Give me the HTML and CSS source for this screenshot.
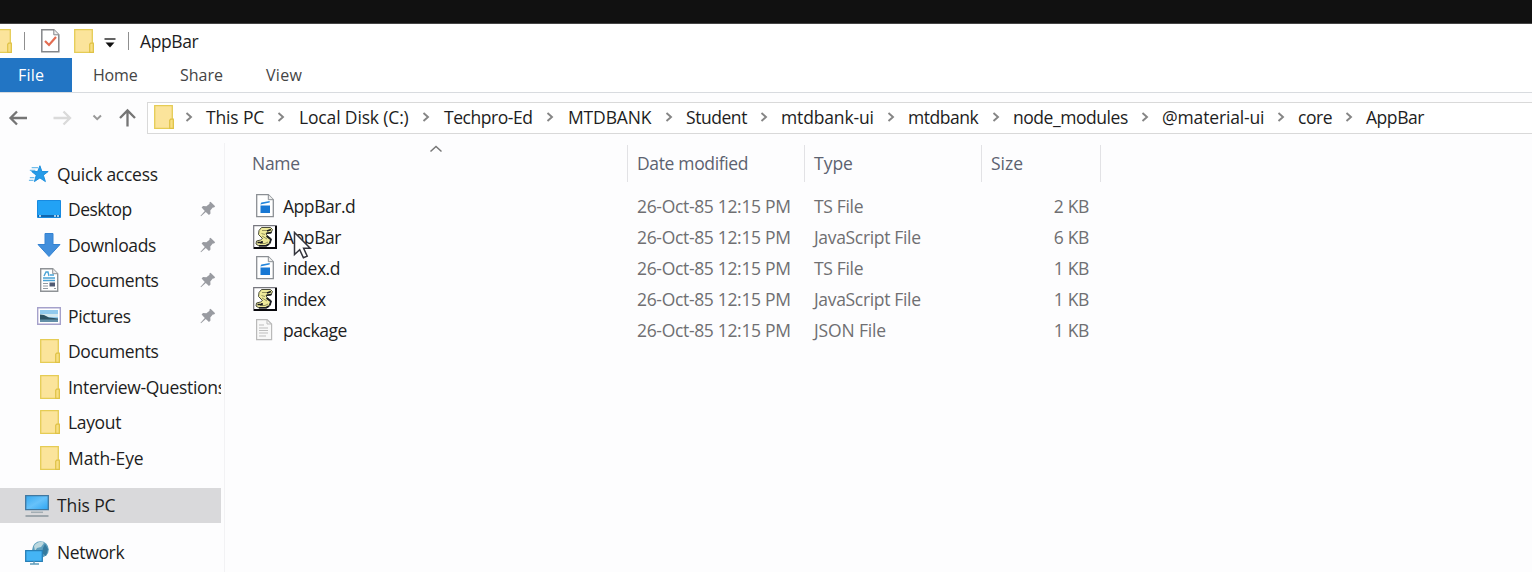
FILE: index.html
```html
<!DOCTYPE html>
<html lang="en">
<head>
<meta charset="utf-8">
<title>AppBar</title>
<link rel="stylesheet" href="styles.css">
</head>
<body>
<svg class="defs" width="0" height="0">
  <symbol id="folder" viewBox="0 0 20 24"><path d="M.7.7h17.6v14.6h1v8H.7z" fill="#fbe49b" stroke="#e5cc55" stroke-width="1.3"/><path d="M15.7 23.3v-8l1-1.2h2.6v9.2z" fill="#f8df83" stroke="#dfc246" stroke-width="1.2"/></symbol>
  <symbol id="pin" viewBox="0 0 16 16"><path d="M10.5.8l4.700 4.400-1.200 1.400-1.200-.2-2.500 3 .2 3.100-1.500 1.500-3.200-3L1 15.200l-.5-.5 4.300-4.700-3.200-3.500L3 5l3.400.3 3.200-2.500-.3-1z" fill="#999ba1"/></symbol>
  <symbol id="sep" viewBox="0 0 8 10"><path d="M1.5 1L6 5 1.500 9" fill="none" stroke="#858585" stroke-width="1.900"/></symbol>
  <symbol id="ts" viewBox="0 0 18 24"><path d="M.7.7h11.600l5 5v17H.7z" fill="#fff" stroke="#8b8f94" stroke-width="1.300"/><path d="M12.300.7v5h5" fill="#eee" stroke="#8b8f94"/><path d="M4.500 11.500h9.500v7.500H4.500z" fill="#1878d4"/><path d="M4.300 10.500l1-2 8.400-1.500v1.500z" fill="#2486dc"/></symbol>
  <symbol id="js" viewBox="0 0 24 24"><path d="M.7.7h22.600v22.600H.7z" fill="#fff" stroke="#77777f" stroke-width="1.200"/><path d="M23 1v22H1" fill="none" stroke="#08080c" stroke-width="2"/><path d="M8.500 2.500h9l2 2-1.500 3.500-5 .5 1 2 4 3-.5 4.500-3.500 3H6l-3-2 .5-3 4-1 2-1.500-4-4 .5-4z" fill="#eeea9a" stroke="#4b4d3a" stroke-width="1"/><path d="M9 5.500h6M8.500 8.500l3.500 1M9 11l5 3M7 18.500h5l3-1.500" stroke="#96935d" fill="none"/><path d="M14 6l4-1.500M13.500 8.300l5-.8M13.500 11l4.500 3.500-1.500 4M4.500 17.500h4.500v-1.500M6 20.800h7l3-1.800" stroke="#191b22" stroke-width="1.600" fill="none"/></symbol>
</svg>
<div class="black"></div>
<header class="title">
  <svg class="cut" width="12" height="24" viewBox="8 0 12 24"><use href="#folder" width="20" height="24"/></svg>
  <i class="bar b1"></i>
  <svg class="check" width="19" height="24" viewBox="0 0 19 24"><path d="M.8.800h12l5 5v17H.8z" fill="#fff" stroke="#85878a" stroke-width="1.500"/><path d="M12.800.8v5h5" fill="#eee" stroke="#85878a"/><path d="M4 12l4 4 7-8" fill="none" stroke="#e36c51" stroke-width="2.200"/></svg>
  <svg class="f2" width="20" height="24"><use href="#folder"/></svg>
  <svg class="drop" width="12" height="10" viewBox="0 0 12 10"><path d="M.5 1h11" stroke="#222" stroke-width="1.400"/><path d="M1.500 4.500h9L6 9.500z" fill="#111"/></svg>
  <i class="bar b2"></i>
  <span class="t-title">AppBar</span>
</header>
<nav class="tabs"><span class="file">File</span><span class="home">Home</span><span class="share">Share</span><span class="view">View</span></nav>
<div class="address">
  <svg class="nav" width="147" height="32" viewBox="0 0 147 32" fill="none" stroke-width="2.300"><path d="M27 15H11M17 8.500L10.500 15l6.500 6.500" stroke="#757575"/><path d="M53.500 15h16M63.500 8.500L70 15l-6.500 6.500" stroke="#dadada"/><path d="M93.500 12.500l3.700 3.700 3.800-3.700" stroke="#999" stroke-width="2"/><path d="M127.500 23.500V8M120 15l7.500-7.500L135 15" stroke="#757575"/></svg>
  <div class="box">
    <svg class="f3" width="20" height="24"><use href="#folder"/></svg>
    <div class="crumbs">
      <svg class="sep"><use href="#sep"/></svg><span>This PC</span>
      <svg class="sep"><use href="#sep"/></svg><span>Local Disk (C:)</span>
      <svg class="sep"><use href="#sep"/></svg><span class="tight">Techpro-Ed</span>
      <svg class="sep"><use href="#sep"/></svg><span>MTDBANK</span>
      <svg class="sep"><use href="#sep"/></svg><span class="tight">Student</span>
      <svg class="sep"><use href="#sep"/></svg><span>mtdbank-ui</span>
      <svg class="sep"><use href="#sep"/></svg><span class="tight">mtdbank</span>
      <svg class="sep"><use href="#sep"/></svg><span class="tight">node_modules</span>
      <svg class="sep"><use href="#sep"/></svg><span>@material-ui</span>
      <svg class="sep"><use href="#sep"/></svg><span class="tight">core</span>
      <svg class="sep"><use href="#sep"/></svg><span class="tight">AppBar</span>
    </div>
  </div>
</div>
<main class="main">
  <aside class="side">
    <div class="item root"><svg class="ic" viewBox="0 0 24 24"><path d="M13 3l2.200 6.300H22l-5.200 4 2.200 7-6-4-6 4 2-7-5-4h6.500z" fill="#279ce8" stroke="#168bdc"/><path d="M4 5h7M2 8h6M2 16h5M1 19h5" stroke="#72bdea" stroke-width="1.300"/></svg><span class="qa">Quick access</span></div>
    <div class="item"><svg class="ic" viewBox="0 0 24 24"><path d="M.5 3.500h23v17H.5z" fill="#22a2f5" stroke="#188ae0"/><path d="M1 19h22" stroke="#1066ae" stroke-width="2"/><path d="M2 19h2M17 19h2M20 19h2" stroke="#d5efff" stroke-width="1.500"/></svg><span class="desk">Desktop</span><svg class="pin"><use href="#pin"/></svg></div>
    <div class="item"><svg class="ic" viewBox="0 0 24 24"><path d="M8 .5h8v11h7L12 23.500 1 11.500h7z" fill="#428fdc" stroke="#3483d2"/></svg><span class="down">Downloads</span><svg class="pin"><use href="#pin"/></svg></div>
    <div class="item"><svg class="ic" viewBox="0 0 24 24"><path d="M3.700.7h12l5 5v17.600h-17z" fill="#fff" stroke="#8e9296" stroke-width="1.400"/><path d="M15.700.7v5h5" fill="#eee" stroke="#8e9296"/><path d="M7 8l2-4h2l1 4M13 7h4M6 10h12M6 12.500h12" stroke="#4aa3d5" stroke-width="1.400" fill="none"/><path d="M6 15.500h5M6 18h5M6 20.500h5M17 20.500h2" stroke="#929aa2"/><path d="M12.500 14.500h5.500v4h-5.500z" fill="#505a73"/></svg><span class="docs">Documents</span><svg class="pin"><use href="#pin"/></svg></div>
    <div class="item"><svg class="ic" viewBox="0 0 24 24"><path d="M.7 3.700h22.600v16.600H.7z" fill="#fff" stroke="#a5a1cb" stroke-width="1.400"/><path d="M3 6h18v12H3z" fill="#91c9ed"/><path d="M3 10h18v3H3z" fill="#d4e8ef"/><path d="M3 10.500l4 .5 5 2.500 9 1V16H3z" fill="#2e5264"/><path d="M3 15.500h18V18H3z" fill="#6390a8"/></svg><span class="pics">Pictures</span><svg class="pin"><use href="#pin"/></svg></div>
    <div class="item"><svg class="ic fo"><use href="#folder"/></svg><span class="docs">Documents</span></div>
    <div class="item"><svg class="ic fo"><use href="#folder"/></svg><span class="iq">Interview-Questions</span></div>
    <div class="item"><svg class="ic fo"><use href="#folder"/></svg><span class="lay">Layout</span></div>
    <div class="item"><svg class="ic fo"><use href="#folder"/></svg><span class="math">Math-Eye</span></div>
    <div class="item root2 sel"><svg class="ic" viewBox="0 0 24 24"><defs><linearGradient id="g" x2="1" y2="1"><stop stop-color="#35a8ef"/><stop offset=".5" stop-color="#67c2fa"/><stop offset="1" stop-color="#2ba5f4"/></linearGradient></defs><path d="M.7 2.700h22.600v14H.7z" fill="url(#g)" stroke="#40779f" stroke-width="1.300"/><path d="M6 19.300h12" stroke="#a2adb3" stroke-width="1.500"/><path d="M.5 23h23" stroke="#89959d" stroke-width="1.500"/></svg><span class="pc">This PC</span></div>
    <div class="item root2 net"><svg class="ic" viewBox="0 0 24 24"><circle cx="15.500" cy="8.500" r="8.300" fill="#5d9fbd"/><path d="M9 5c3-5 9-5 10-3l-3 4-4 1-2 3z" fill="#bcd8df"/><path d="M20 3l3 5-2 7-4-3 1-5z" fill="#357a9e"/><path d="M.7 9.700h16.600v10.600H.7z" fill="#44b4f5" stroke="#287fb6" stroke-width="1.300"/><path d="M9 20v3M5 23h9" stroke="#5c9ab9" stroke-width="1.400"/></svg><span class="nw">Network</span></div>
  </aside>
  <section class="list">
    <div class="head">
      <div class="c-name"><span class="h-name">Name</span><svg class="sort" width="14" height="8" viewBox="0 0 14 8"><path d="M1.500 6.500L7 1.500l5.500 5" fill="none" stroke="#777" stroke-width="1.500"/></svg></div>
      <div class="c"><span class="h-date">Date modified</span></div><div class="c"><span class="h-type">Type</span></div><div class="c last"><span class="h-size">Size</span></div>
    </div>
    <div class="row"><svg class="fi ts-icon"><use href="#ts"/></svg><span class="n n1">AppBar.d</span><span class="d">26-Oct-85 12:15 PM</span><span class="ty">TS File</span><span class="s">2 KB</span></div>
    <div class="row"><svg class="fi"><use href="#js"/></svg><span class="n n2">AppBar</span><span class="d">26-Oct-85 12:15 PM</span><span class="ty">JavaScript File</span><span class="s">6 KB</span>
      <svg class="cursor" width="20" height="29" viewBox="0 0 20 29"><path d="M1.500 1.500v22l5.200-4.700 3.700 8 3.800-1.700-3.600-7.800h6.600z" fill="#fff" stroke="#33343c" stroke-width="1.500"/></svg></div>
    <div class="row"><svg class="fi ts-icon"><use href="#ts"/></svg><span class="n n3">index.d</span><span class="d">26-Oct-85 12:15 PM</span><span class="ty">TS File</span><span class="s">1 KB</span></div>
    <div class="row"><svg class="fi"><use href="#js"/></svg><span class="n n4">index</span><span class="d">26-Oct-85 12:15 PM</span><span class="ty">JavaScript File</span><span class="s">1 KB</span></div>
    <div class="row"><svg class="fi" viewBox="0 0 24 24"><path d="M3.600 1.600h10.500l4.500 4.500v15.500h-15z" fill="#f8f8f8" stroke="#b9b9b9" stroke-width="1.200"/><path d="M14 1.600V6h4.600M6 7h5M6 10h9M6 12.500h9M6 15h9M6 18h7" fill="none" stroke="#bdbdbd"/></svg><span class="n n5">package</span><span class="d">26-Oct-85 12:15 PM</span><span class="ty json">JSON File</span><span class="s">1 KB</span></div>
  </section>
</main>
</body>
</html>
```
FILE: styles.css
```css
* { box-sizing: border-box; }
body { margin: 0; width: 1532px; height: 572px; overflow: hidden; background: #fdfdfe; font: 17.5px/24px "Open Sans", "Noto Sans", sans-serif; color: #1d1d22; }
span { white-space: nowrap; }
svg { flex: none; display: block; }
.defs { position: absolute; }
.black { height: 24px; background: #111; border-bottom: 1px solid #444; }
.title { height: 34px; display: flex; align-items: center; background: #fff; }
.bar { width: 1px; height: 18px; background: #8f8f8f; }
.b1 { margin: 0 16px 0 12px; }
.f2 { margin-left: 14px; }
.drop { margin: 3px 12px 0 10px; }
.b2 { margin-left: 0; }
.t-title { margin-left: 11px; letter-spacing: -0.4px; }
.tabs { height: 35px; display: flex; align-items: center; background: #fff; border-bottom: 1px solid #d8dbdf; font-size: 16px; color: #444; }
.file { width: 72px; height: 34px; padding: 5px 0 0 18px; background: #2275c4; color: #fff; letter-spacing: 0.2px; }
.home { width: 87px; margin-left: 21px; letter-spacing: -0.2px; }
.share { width: 86px; }
.view { letter-spacing: 0.3px; }
.address { height: 50px; display: flex; padding-top: 9px; }
.nav { margin-top: 1px; height: 32px; }
.box { width: 1385px; height: 32px; border: 1px solid #d9d9d9; border-right: 0; display: flex; align-items: center; background: #fff; }
.f3 { margin: 0 9px 2px 6px; }
.crumbs { display: grid; height: 24px; margin-bottom: 3px; letter-spacing: -0.15px; grid-template-columns: 23px 58px 35px 110px 35px 89px 35px 84px 34px 61px 34px 93px 34px 71px 34px 115px 34px 102px 34px 34px 34px 60px; align-items: center; }
.tight { letter-spacing: -0.45px; }
.sep { width: 8px; height: 10px; margin-left: 13px; }
.sep:first-child { margin-left: 2px; }
.main { display: flex; height: 429px; }
.side { width: 225px; padding-top: 13px; border-right: 1px solid #f2f2f4; }
.item { height: 35.5px; width: 221px; display: flex; align-items: center; padding-left: 37px; overflow: hidden; letter-spacing: -0.35px; }
.item span { margin-left: 7px; flex: none; }
.desk { letter-spacing: -0.55px; }
.iq { letter-spacing: -0.32px; }
.math { letter-spacing: -0.1px; }
.ic { width: 24px; height: 24px; }
.fo { margin-left: 1px; margin-right: -1px; }
.root { padding-left: 28px; }
.root .ic { width: 22px; }
.root .qa { letter-spacing: -0.25px; }
.pin { width: 16px; height: 16px; margin: 0 5px 0 auto; }
.root2 { padding-left: 25px; }
.root2 span { margin-left: 8px; }
.sel { background: #d9d9db; margin-top: 12px; }
.pc { letter-spacing: -0.1px; }
.net { margin-top: 12px; }
.root2 .nw { letter-spacing: -0.35px; margin-bottom: 1px; }
.list { flex: 1; padding-top: 2px; }
.head { display: flex; height: 37px; color: #5c6270; }
.head > div { border-right: 1px solid #e2e2e5; padding: 6px 0 0 9px; width: 177px; height: 37px; }
.head > .c-name { width: 403px; padding-left: 27px; display: flex; }
.head > .last { width: 119px; }
.h-name { letter-spacing: -0.3px; }
.h-date { letter-spacing: -0.35px; }
.sort { margin: -6px 0 0 129px; }
.row { position: relative; height: 31px; display: grid; grid-template-columns: 30px 354px 177px 169px 106px; align-items: center; padding-left: 28px; color: #6f6f72; letter-spacing: -0.33px; }
.head + .row { margin-top: 8px; }
.fi { width: 24px; height: 24px; }
.ts-icon { width: 18px; margin-left: 3px; }
.n { color: #1d1d22; letter-spacing: -0.45px; }
.json { letter-spacing: -0.15px; }
.s { text-align: right; }
.cursor { position: absolute; left: 68px; top: 10px; }
```
